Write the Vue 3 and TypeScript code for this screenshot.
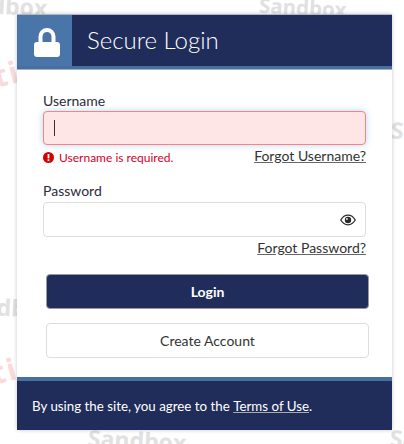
<script setup lang="ts">
const marks = [
  { text: 'Sandbox', cls: 'wm grey small', x: 259, y: -8 },
  { text: 'Sandbox', cls: 'wm grey', x: -51, y: -10 },
  { text: 'Sandbox', cls: 'wm grey', x: 391, y: 117 },
  { text: 'Sandbox', cls: 'wm grey', x: -45, y: 292 },
  { text: 'Sandbox', cls: 'wm grey', x: 88, y: 425 },
  { text: 'Sandbox', cls: 'wm grey', x: 390, y: 425 },
  { text: 'Citi', cls: 'wm red', x: -38, y: 63 },
  { text: 'Citi', cls: 'wm red', x: -40, y: 360 },
]
</script>

<template>
  <div class="page">
    <span
      v-for="(m, i) in marks"
      :key="i"
      :class="m.cls"
      :style="{ left: m.x + 'px', top: m.y + 'px' }"
    >{{ m.text }}</span>
    <main class="card">
      <header class="head">
        <div class="lock">
          <svg width="26" height="29" viewBox="0 0 26 29">
            <path d="M6.5 15V8.5a6.5 6.5 0 0 1 13 0V15" fill="none" stroke="#fff" stroke-width="4" />
            <rect x="0" y="14" width="26" height="15" rx="3" fill="#fff" />
          </svg>
        </div>
        <h1 class="title">Secure Login</h1>
      </header>
      <form class="body" @submit.prevent>
        <div class="field">
          <label class="label">Username</label>
          <div class="input invalid"><span class="caret"></span></div>
          <div class="under">
            <span class="err">
              <svg width="11" height="11" viewBox="0 0 11 11">
                <circle cx="5.5" cy="5.5" r="5.5" fill="#d50000" />
                <rect x="4.6" y="2" width="1.8" height="4.4" fill="#fff" />
                <rect x="4.6" y="7.3" width="1.8" height="1.8" fill="#fff" />
              </svg>
              Username is required.
            </span>
            <a class="link">Forgot Username?</a>
          </div>
        </div>
        <div class="field second">
          <label class="label">Password</label>
          <div class="input plain">
            <svg width="16" height="12" viewBox="0 0 16 12">
              <path d="M0.8 6C2.6 2.8 5 1.2 8 1.2S13.4 2.8 15.2 6C13.4 9.2 11 10.8 8 10.8S2.6 9.2 0.8 6Z" fill="none" stroke="#2b2b2b" stroke-width="1.3" />
              <circle cx="8" cy="6" r="3.2" fill="#2b2b2b" />
              <circle cx="6.9" cy="4.9" r="0.9" fill="#fff" />
            </svg>
          </div>
          <div class="under end">
            <a class="link">Forgot Password?</a>
          </div>
        </div>
        <div class="actions">
          <button class="btn primary" type="button">Login</button>
          <button class="btn ghost" type="button">Create Account</button>
        </div>
      </form>
      <footer class="foot">
        By using the site, you agree to the&nbsp;<a class="terms">Terms of Use</a>.
      </footer>
    </main>
  </div>
</template>

<style>
html, body { margin: 0; background: #fff; }
</style>

<style scoped>
.page {
  position: relative;
  width: 404px;
  height: 444px;
  overflow: hidden;
  padding: 14px 12px 0 17px;
  box-sizing: border-box;
  font-family: Lato, sans-serif;
  color: #333;
}
.wm {
  position: absolute;
  font: bold 23px "Open Sans", sans-serif;
  white-space: nowrap;
  line-height: 30px;
  transform: rotate(3deg);
}
.small { font-size: 20.5px; }
.grey { color: #e1e1e1; }
.red {
  color: #f9d9d9;
  font-size: 30px;
  letter-spacing: 2px;
  transform: rotate(-15deg);
}
.card {
  position: relative;
  width: 375px;
  background: #fff;
  box-shadow: 0 0 4px rgba(0, 0, 0, 0.22);
}
.head {
  display: flex;
  height: 51px;
  background: #202d5b;
  border-top: 1px solid #b4b7c2;
  border-bottom: 3px solid #47709f;
}
.lock {
  width: 55px;
  box-sizing: border-box;
  padding: 3px 0 0 5px;
  display: flex;
  align-items: center;
  justify-content: center;
  background: #4a75a9;
}
.title {
  margin: 0 0 0 15px;
  font-size: 24px;
  font-weight: 300;
  line-height: 49px;
  color: #fff;
}
.body {
  padding: 22px 26px 19px;
  border-top: 1px solid #9fb1cc;
}
.field { display: flex; flex-direction: column; }
.second { margin-top: 16px; }
.label { font-size: 14px; line-height: 18px; color: #2c2c3a; margin-bottom: 1px; }
.second .label { margin-bottom: 2px; }
.input {
  height: 34px;
  box-sizing: border-box;
  border-radius: 4px;
  display: flex;
  align-items: center;
}
.invalid {
  background: #ffe6e6;
  border: 1px solid #ff8080;
  box-shadow: 0 0 6px rgba(102, 175, 233, 0.5);
  padding-left: 10px;
}
.caret { width: 1px; height: 16px; background: #333; }
.plain {
  height: 35px;
  border: 1px solid #ddd;
  justify-content: flex-end;
  padding-right: 9px;
}
.under {
  display: flex;
  justify-content: space-between;
  align-items: center;
  height: 18px;
  margin-top: 3px;
}
.end { justify-content: flex-end; }
.err {
  display: flex;
  align-items: center;
  gap: 5px;
  font-size: 12px;
  color: #d5002b;
}
.link {
  font-size: 14px;
  line-height: 16px;
  margin-bottom: 3px;
  color: #333;
  text-decoration: underline;
  text-decoration-color: #666;
}
.actions {
  display: flex;
  flex-direction: column;
  gap: 14px;
  margin: 16px -3px 0 3px;
}
.btn {
  height: 35px;
  border-radius: 4px;
  font: 14px Lato, sans-serif;
  cursor: pointer;
}
.primary { background: #202d5b; border: 1px solid #999; color: #fff; font-weight: 700; }
.ghost { background: #fff; border: 1px solid #ddd; color: #333; }
.foot {
  display: flex;
  align-items: center;
  height: 49px;
  padding-left: 15px;
  background: #202d5b;
  border-top: 4px solid #47709f;
  color: #fff;
  font-size: 13.33px;
}
.terms { text-decoration: underline; text-decoration-color: #aaa; }
</style>
